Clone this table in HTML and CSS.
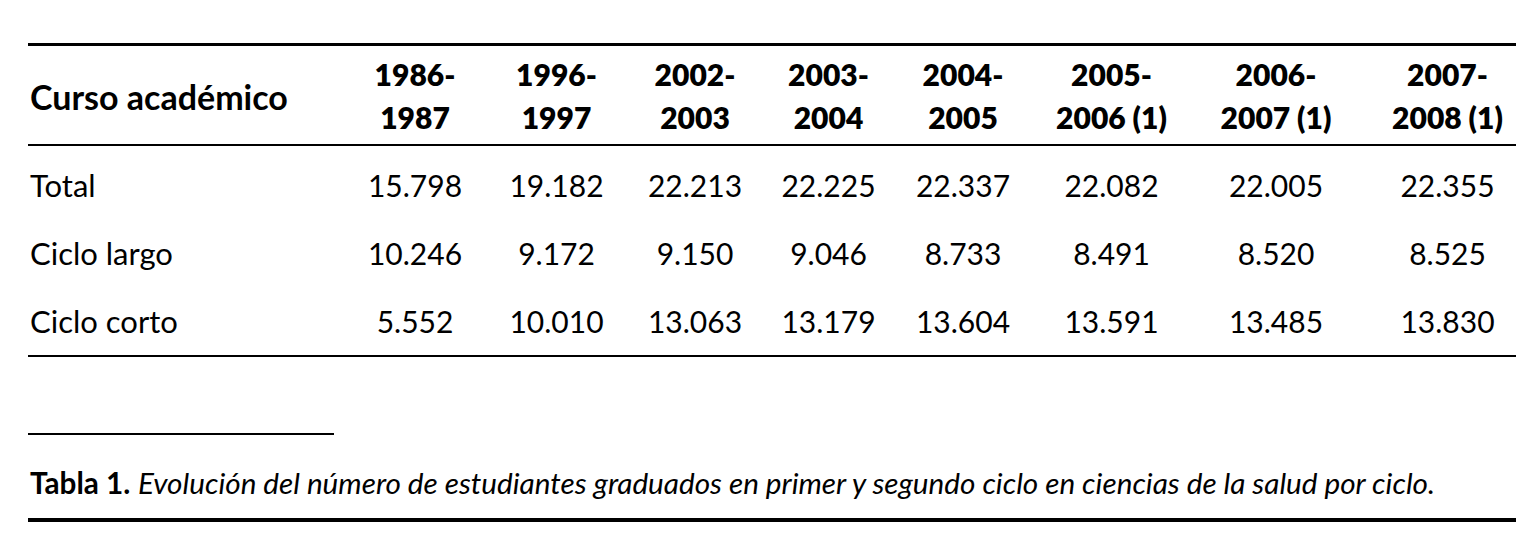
FILE: index.html
```html
<!DOCTYPE html>
<html lang="es">
<head>
  <meta charset="UTF-8" />
  <meta name="viewport" content="width=device-width, initial-scale=1.0"/>
  <title>Tabla 1</title>
  <link rel="stylesheet" href="styles.css">
</head>
<body>
  <div class="tabla-wrap">
    <table class="tabla">
      <colgroup>
        <col class="c-label">
        <col class="c2"><col class="c3"><col class="c4"><col class="c5">
        <col class="c6"><col class="c7"><col class="c8"><col class="c9">
      </colgroup>
      <thead>
        <tr>
          <th class="label">Curso académico</th>
          <th>1986-<br>1987</th>
          <th>1996-<br>1997</th>
          <th>2002-<br>2003</th>
          <th>2003-<br>2004</th>
          <th>2004-<br>2005</th>
          <th>2005-<br>2006 (1)</th>
          <th>2006-<br>2007 (1)</th>
          <th class="last">2007-<br>2008 (1)</th>
        </tr>
      </thead>
      <tbody>
        <tr class="first">
          <td class="label">Total</td>
          <td>15.798</td><td>19.182</td><td>22.213</td><td>22.225</td>
          <td>22.337</td><td>22.082</td><td>22.005</td><td class="last">22.355</td>
        </tr>
        <tr>
          <td class="label">Ciclo largo</td>
          <td>10.246</td><td>9.172</td><td>9.150</td><td>9.046</td>
          <td>8.733</td><td>8.491</td><td>8.520</td><td class="last">8.525</td>
        </tr>
        <tr>
          <td class="label">Ciclo corto</td>
          <td>5.552</td><td>10.010</td><td>13.063</td><td>13.179</td>
          <td>13.604</td><td>13.591</td><td>13.485</td><td class="last">13.830</td>
        </tr>
      </tbody>
    </table>

    <div class="nota-linea"></div>

    <p class="leyenda"><b>Tabla 1.</b> <i>Evolución del número de estudiantes graduados en primer y segundo ciclo en ciencias de la salud por ciclo.</i></p>
  </div>
</body>
</html>
```

FILE: styles.css
```css
body {
  margin: 0;
  background: #fff;
  color: #000;
  font-family: 'Lato', 'Open Sans', sans-serif;
}

.tabla-wrap {
  width: 1488px;
  margin-left: 28px;
  padding-top: 43px;
}

.tabla {
  width: 1488px;
  border-collapse: collapse;
  table-layout: fixed;
  border-top: 3px solid #000;
  border-bottom: 2px solid #000;
}

.c-label { width: 316px; }
.c2 { width: 142px; }
.c3 { width: 141px; }
.c4 { width: 136px; }
.c5 { width: 131px; }
.c6 { width: 138px; }
.c7 { width: 159px; }
.c8 { width: 170px; }
.c9 { width: 155px; }

.tabla th {
  font-size: 30px;
  font-weight: 800;
  line-height: 43px;
  padding: 7px 0 5px;
  text-align: center;
  border-bottom: 2px solid #000;
}

.tabla th.label {
  font-size: 34px;
  font-weight: 700;
}

.tabla td {
  font-size: 30px;
  line-height: 34px;
  padding: 17px 0;
  text-align: center;
}

.tabla tr.first td {
  padding-top: 22px;
}

.tabla .label {
  text-align: left;
  padding-left: 2px;
}

.tabla td.label {
  font-size: 31px;
}

.tabla .last {
  padding-left: 18px;
}

.nota-linea {
  width: 306px;
  height: 2px;
  background: #000;
  margin-top: 76px;
}

.leyenda {
  margin: 0;
  padding: 31px 0 18px 2px;
  font-size: 29.7px;
  line-height: 34px;
  border-bottom: 4px solid #000;
}

.leyenda b {
  font-weight: 700;
}
```
